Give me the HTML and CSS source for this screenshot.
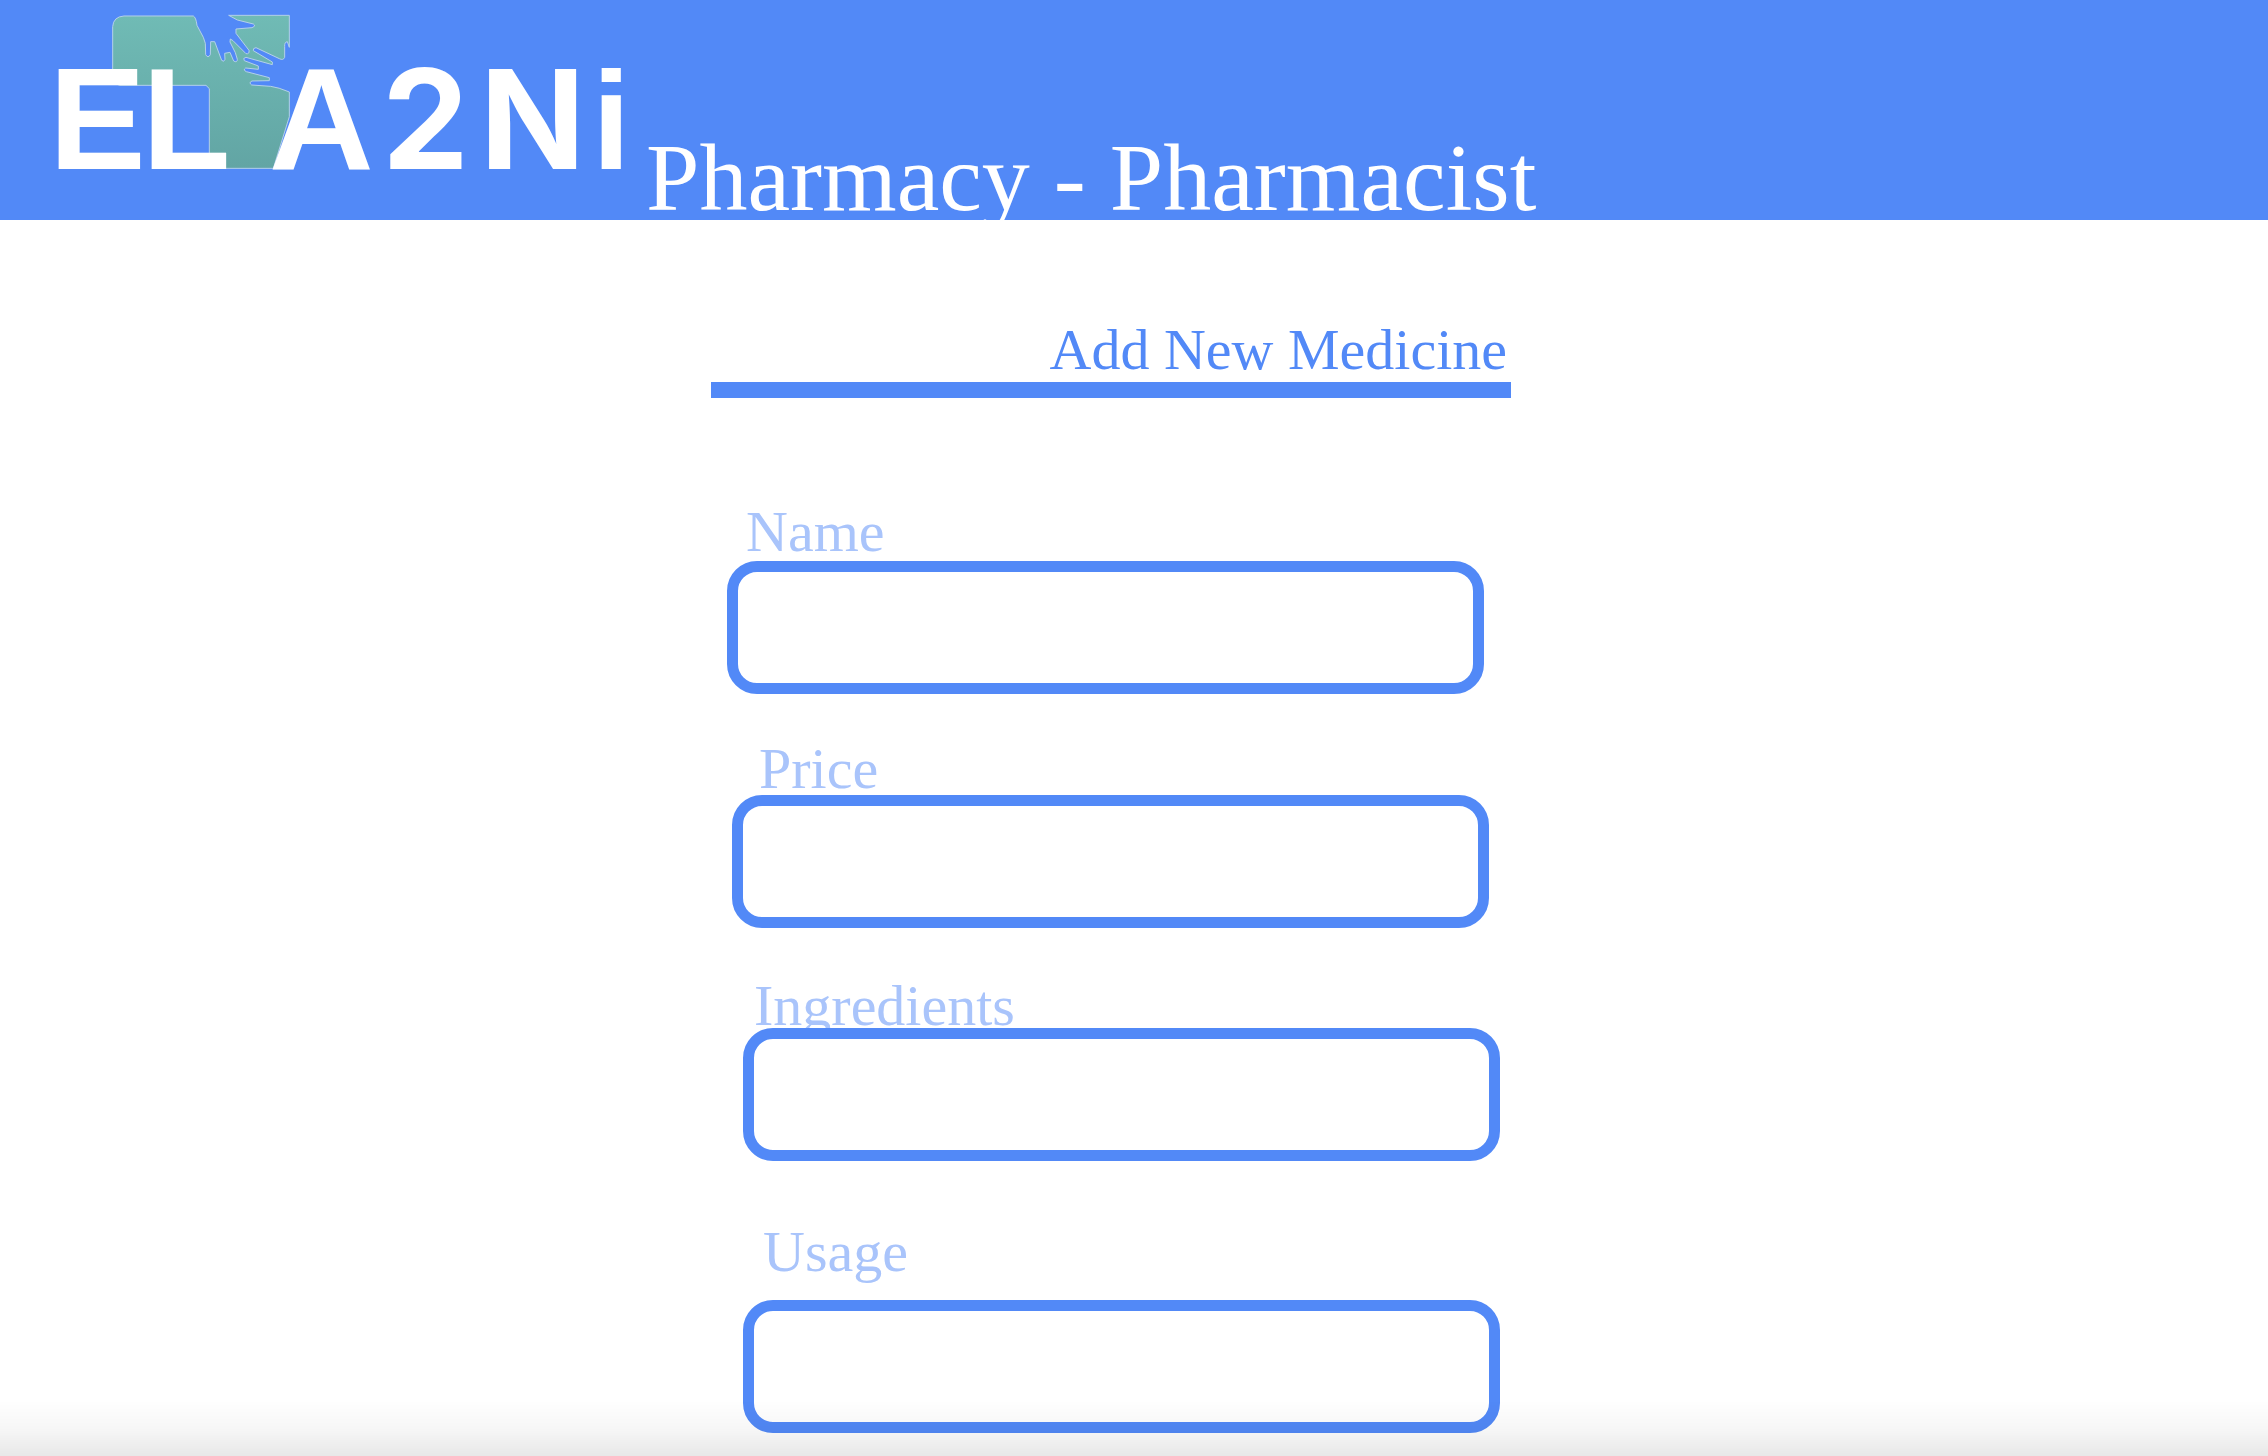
FILE: index.html
```html
<!DOCTYPE html>
<html lang="en">
<head>
  <meta charset="utf-8">
  <meta name="viewport" content="width=device-width, initial-scale=1">
  <title>Pharmacy - Pharmacist</title>
  <link rel="stylesheet" href="styles.css">
</head>
<body>
  <header class="banner">
    <svg class="logo" viewBox="40 0 600 216" role="img" aria-label="ELA2Ni">
      <defs>
        <linearGradient id="cross" x1="0" y1="0" x2="0" y2="1">
          <stop offset="0" stop-color="#70bbb5"/>
          <stop offset="1" stop-color="#62a5a4"/>
        </linearGradient>
      </defs>
      <g transform="translate(40 0) scale(.33333)">
        <path class="logo-cross" fill="url(#cross)" d="M218 80Q220 50 252 48L460 48Q468 52 471 76L490 112L496 130L497 164Q504 176 511 164L512 125L524 125L545 181Q552 188 555 178L554 160L570 157L581 183Q592 189 592 178L586 158L570 126L571 117L579 122L618 161Q629 163 627 151L588 100L588 87L636 83Q649 78 640 72L592 60L566 46L748 46L748 142L742 125Q733 126 734 140L734 172Q730 182 718 176L648 143Q638 144 640 152L697 186L697 194L618 172Q607 174 613 182L655 198L655 208L617 204Q608 210 619 215L688 233L688 242L636 243Q625 248 635 255L692 259Q715 262 748 276L748 350L700 505L508 505L508 266L498 256L240 256Q222 252 218 236Z"/>
      </g>
      <text class="logo-text" y="169"><tspan x="49">E</tspan><tspan x="142">L</tspan><tspan x="269">A</tspan><tspan class="logo-wide" x="382">2</tspan><tspan class="logo-wide" x="480">N</tspan><tspan class="logo-i" x="592">i</tspan></text>
    </svg>
    <h1 class="banner-title">Pharmacy - Pharmacist</h1>
  </header>

  <main class="page">
    <form class="form">
      <h2 class="form-title">Add New Medicine</h2>
      <div class="field field-name">
        <label for="name">Name</label>
        <input id="name" type="text">
      </div>
      <div class="field field-price">
        <label for="price">Price</label>
        <input id="price" type="text">
      </div>
      <div class="field field-ingredients">
        <label for="ingredients">Ingredients</label>
        <input id="ingredients" type="text">
      </div>
      <div class="field field-usage">
        <label for="usage">Usage</label>
        <input id="usage" type="text">
      </div>
    </form>
  </main>
  <div class="bottom-shade"></div>
</body>
</html>
```
FILE: styles.css
```css
* {
  box-sizing: border-box;
}

body {
  margin: 0;
  background: #fff;
  font-family: "Liberation Serif", "Times New Roman", serif;
}

.banner {
  display: flex;
  align-items: flex-end;
  gap: 6px;
  padding: 0 40px 4px;
  background: #5289f7;
  color: #fff;
}

.logo {
  flex: none;
  width: 600px;
  height: 216px;
  overflow: visible;
}

.logo-cross {
  stroke: #b4d0ea;
  stroke-width: 3;
  stroke-linejoin: round;
}

.logo-text {
  fill: #fff;
  font: bold 145px "Liberation Sans", Arial, sans-serif;
}

.logo-wide {
  font: bold 138px Inter, sans-serif;
}

.logo-i {
  font-size: 139px;
}

.banner-title {
  margin: 0;
  font-size: 96px;
  font-weight: 400;
  line-height: 76px;
}

.page {
  padding: 108px 46px 22px 0;
}

.form {
  max-width: 800px;
  margin: 0 auto;
}

.form-title {
  margin: 0 0 112px;
  padding: 0 4px 10px;
  border-bottom: 16px solid #5289f7;
  color: #5289f7;
  font-size: 58px;
  font-weight: 400;
  line-height: 44px;
  text-align: right;
}

.field {
  display: flex;
  flex-direction: column;
  max-width: 757px;
}

.field label {
  color: #a9c4fb;
  font-size: 58px;
  line-height: 44px;
}

.field input {
  width: 100%;
  height: 133px;
  padding: 0 24px;
  border: 11px solid #5289f7;
  border-radius: 30px;
  background: #fff;
  color: #5289f7;
  font: inherit;
  font-size: 58px;
  outline: 0;
}

.field-name {
  gap: 7px;
  margin: 0 0 53px 16px;
}

.field-name label {
  padding-left: 19px;
}

.field-price {
  gap: 4px;
  margin: 0 0 56px 21px;
}

.field-price label {
  padding-left: 27px;
}

.field-ingredients {
  margin: 0 0 69px 32px;
}

.field-ingredients label {
  padding-left: 11px;
}

.field-usage {
  gap: 26px;
  margin-left: 32px;
}

.field-usage label {
  padding-left: 20px;
}

.bottom-shade {
  position: fixed;
  right: 0;
  bottom: 0;
  left: 0;
  height: 56px;
  background: linear-gradient(rgba(0, 0, 0, 0), rgba(0, 0, 0, .03) 50%, rgba(0, 0, 0, .09));
  pointer-events: none;
}
```
